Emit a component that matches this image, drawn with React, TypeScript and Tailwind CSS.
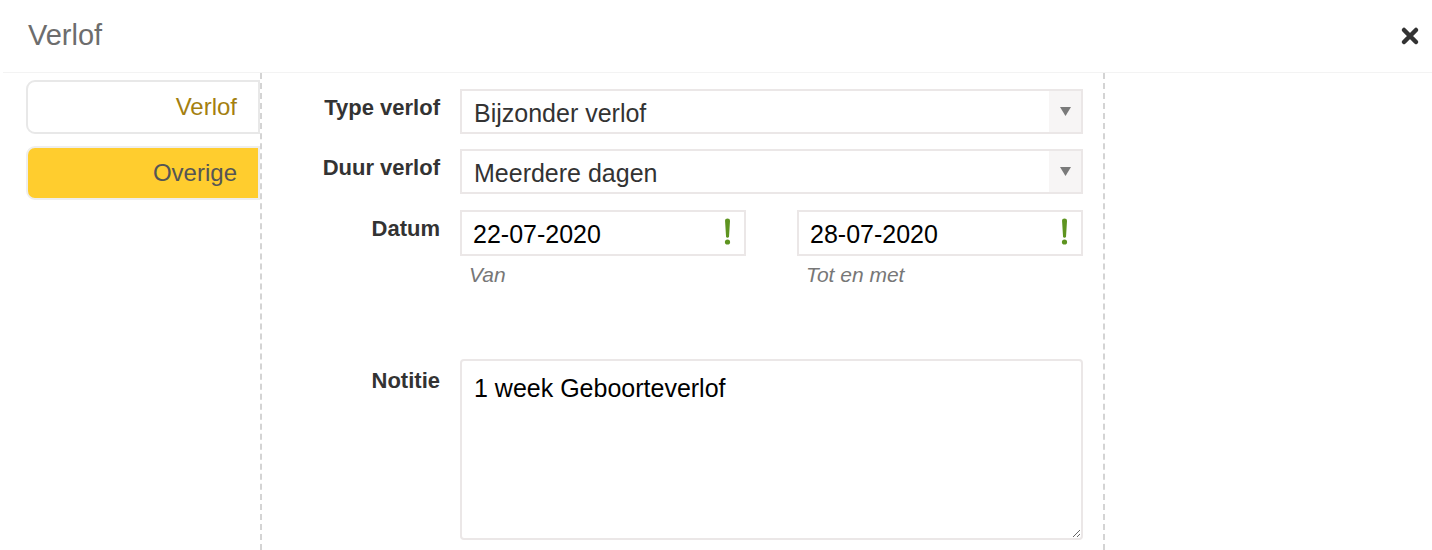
import React from 'react';

const font = { fontFamily: '"Liberation Sans", Arial, Helvetica, sans-serif' };

function SelectBox({ value }: { value: string }) {
  return (
    <div className="flex h-[45px] w-full border-2 border-[#ebe7e7] bg-white">
      <div className="flex flex-1 items-center pl-[12px] pt-[4px] text-[25px] text-[#333]">{value}</div>
      <div className="flex w-[32px] items-center justify-center bg-[#f7f5f5]">
        <svg width="11" height="9" viewBox="0 0 11 9">
          <path d="M0 0 L11 0 L5.5 9 Z" fill="#7a7a7a" />
        </svg>
      </div>
    </div>
  );
}

function DateField({ value, hint }: { value: string; hint: string }) {
  return (
    <div className="flex flex-col">
      <div className="relative flex h-[46px] items-center border-2 border-[#ebe7e7] bg-white pl-[11px] pt-[3px] text-[25px] text-black">
        {value}
        <svg className="absolute right-[13px] top-[6px]" width="7" height="27" viewBox="0 0 7 27">
          <path d="M1 2.5 Q1 0.5 3.5 0.5 Q6 0.5 6 2.5 L5 18.5 Q4.8 19.8 3.5 19.8 Q2.2 19.8 2 18.5 Z" fill="#5e9420" />
          <circle cx="3.5" cy="24" r="2.6" fill="#5e9420" />
        </svg>
      </div>
      <div className="mt-[3px] pl-[9px] text-[21px] italic text-[#777]">{hint}</div>
    </div>
  );
}

function Label({ children }: { children: React.ReactNode }) {
  return <div className="pt-[6px] text-right text-[22px] font-bold leading-[26px] text-[#333]">{children}</div>;
}

export default function App() {
  return (
    <div className="h-[550px] w-[1432px] overflow-hidden bg-white" style={font}>
      <div className="ml-[3px] flex h-[73px] items-center justify-between border-b border-[#f3f3f3] pl-[25px] pr-[12px]">
        <h1 className="text-[29px] text-[#6d6d6d]">Verlof</h1>
        <svg width="20" height="20" viewBox="0 0 20 20">
          <path d="M4 4 L16 16 M16 4 L4 16" stroke="#333" strokeWidth="4.5" strokeLinecap="round" />
        </svg>
      </div>

      <div className="flex h-[477px]">
        <div className="flex w-[262px] flex-col gap-[12px] border-r-2 border-dashed border-[#d4d4d4] pl-[26px] pt-[7px]">
          <div className="flex h-[54px] items-center justify-end rounded-l-[9px] border-2 border-[#e8e8e8] bg-white pr-[21px] text-[24px] text-[#a47f10]">
            Verlof
          </div>
          <div className="flex h-[54px] items-center justify-end rounded-l-[9px] border-2 border-[#eeeeee] bg-[#ffcd2e] pr-[21px] text-[24px] text-[#555]">
            Overige
          </div>
        </div>

        <div className="w-[843px] border-r-2 border-dashed border-[#d4d4d4] pt-[16px]">
          <div className="grid grid-cols-[178px_623px] gap-x-[20px]">
            <Label>Type verlof</Label>
            <SelectBox value="Bijzonder verlof" />

            <div className="col-span-2 h-[15px]" />
            <Label>Duur verlof</Label>
            <SelectBox value="Meerdere dagen" />

            <div className="col-span-2 h-[16px]" />
            <Label>Datum</Label>
            <div className="grid grid-cols-2 gap-x-[51px]">
              <DateField value="22-07-2020" hint="Van" />
              <DateField value="28-07-2020" hint="Tot en met" />
            </div>

            <div className="col-span-2 h-[68px]" />
            <div className="pt-[9px] text-right text-[22px] font-bold leading-[26px] text-[#333]">Notitie</div>
            <textarea
              defaultValue="1 week Geboorteverlof"
              className="h-[181px] w-full rounded-[4px] border-2 border-[#ebe7e7] px-[12px] pt-[12px] text-[25px] leading-[30px] text-black outline-none"
              style={font}
            />
          </div>
        </div>
      </div>
    </div>
  );
}
